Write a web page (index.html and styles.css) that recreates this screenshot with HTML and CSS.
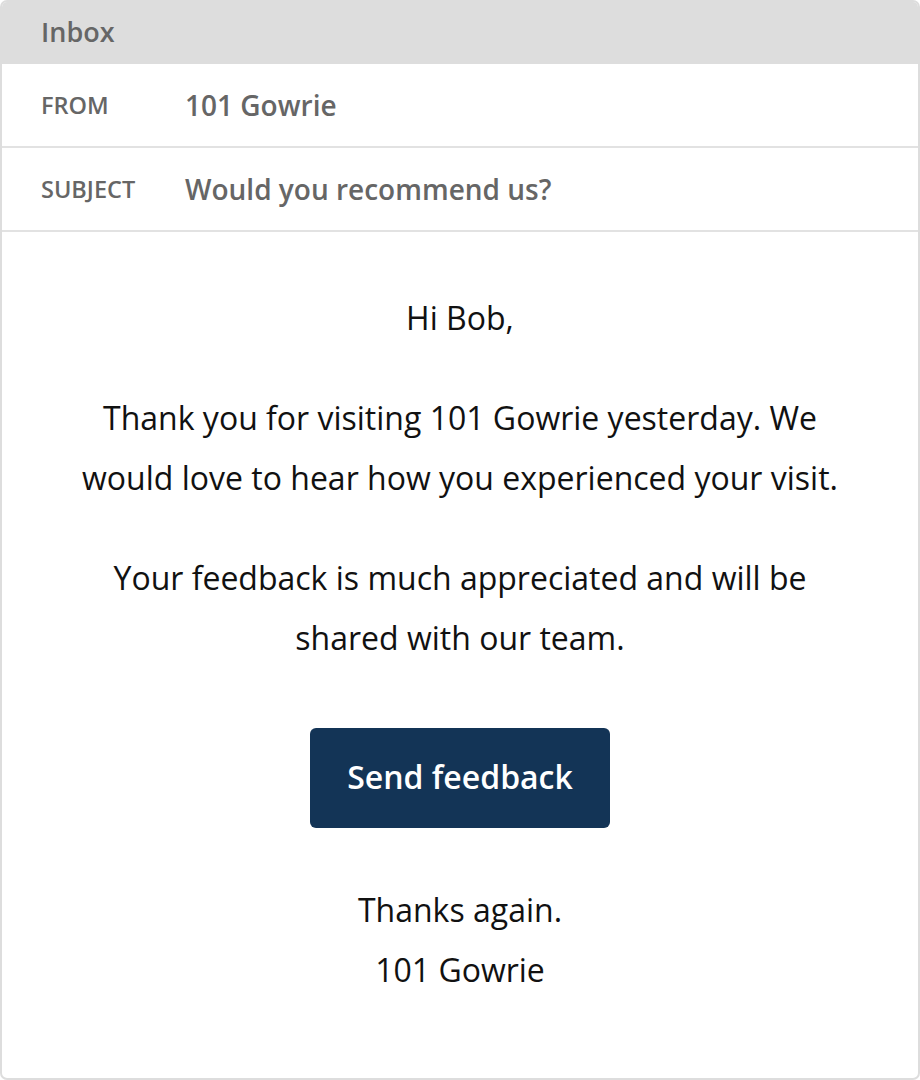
FILE: index.html
```html
<!DOCTYPE html>
<html lang="en">
<head>
<meta charset="utf-8">
<title>Inbox</title>
<link rel="stylesheet" href="styles.css">
</head>
<body>
<div class="mail">
  <div class="mail-head">Inbox</div>
  <div class="meta-row">
    <span class="meta-label">FROM</span>
    <span class="meta-value">101 Gowrie</span>
  </div>
  <div class="meta-row">
    <span class="meta-label">SUBJECT</span>
    <span class="meta-value">Would you recommend us?</span>
  </div>
  <div class="mail-body">
    <p class="para">Hi Bob,</p>
    <p class="para">Thank you for visiting 101 Gowrie yesterday. We would love to hear how you experienced your visit.</p>
    <p class="para">Your feedback is much appreciated and will be shared with our team.</p>
    <a class="cta" href="#">Send feedback</a>
    <p class="para sign">Thanks again.<br>101 Gowrie</p>
  </div>
</div>
</body>
</html>
```
FILE: styles.css
```css
* { box-sizing: border-box; }
html, body { margin: 0; padding: 0; background: #fff; }
body { font-family: "Open Sans", "Noto Sans", sans-serif; }

.mail {
  width: 920px;
  height: 1080px;
  border: 2px solid #dddddd;
  border-radius: 7px;
  overflow: hidden;
  display: flex;
  flex-direction: column;
}

.mail-head {
  height: 62px;
  padding: 0 0 4px 39px;
  background: #dddddd;
  color: #666666;
  font-size: 27px;
  font-weight: 600;
  display: flex;
  align-items: center;
}

.meta-row {
  height: 84px;
  border-bottom: 2px solid #e2e2e2;
  display: flex;
  align-items: center;
  padding-left: 39px;
  color: #666666;
}

.meta-label {
  width: 144px;
  font-size: 23.5px;
  font-weight: 600;
}

.meta-value {
  font-size: 28px;
  font-weight: 600;
}

.mail-body {
  flex: 1;
  display: flex;
  flex-direction: column;
  align-items: center;
  padding: 56px 60px 0;
  text-align: center;
  color: #111111;
}

.para {
  margin: 0 0 40px;
  font-size: 32px;
  line-height: 60px;
  max-width: 775px;
}

.cta {
  margin-top: 20px;
  width: 300px;
  height: 100px;
  padding-bottom: 3px;
  border-radius: 6px;
  background: #133456;
  color: #ffffff;
  text-decoration: none;
  font-size: 32px;
  font-weight: 600;
  display: flex;
  align-items: center;
  justify-content: center;
}

.sign { margin-top: 52px; }
```
